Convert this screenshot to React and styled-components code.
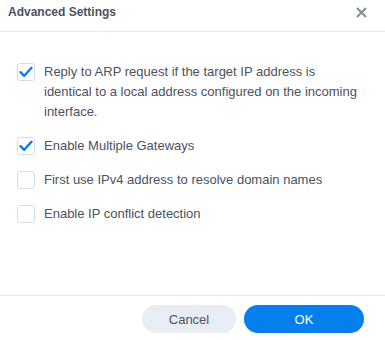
import React, { useState } from 'react';
import styled, { createGlobalStyle } from 'styled-components';

const GlobalStyle = createGlobalStyle`
  html, body {
    margin: 0;
    padding: 0;
    background: #ffffff;
  }
  body {
    font-family: "Liberation Sans", Arial, sans-serif;
  }
`;

const Dialog = styled.div`
  width: 385px;
  height: 340px;
  display: flex;
  flex-direction: column;
  background: #ffffff;
  box-sizing: border-box;
`;

const Header = styled.div`
  height: 32px;
  box-sizing: border-box;
  border-bottom: 1px solid #e6eaf0;
  display: flex;
  align-items: center;
  justify-content: space-between;
  padding: 0 17px 7px 8px;
`;

const Title = styled.div`
  font-size: 12px;
  font-weight: bold;
  color: #4b5260;
`;

const CloseButton = styled.button`
  border: none;
  background: none;
  padding: 0;
  width: 14px;
  height: 14px;
  display: flex;
  align-items: center;
  justify-content: center;
  cursor: pointer;
`;

const Body = styled.div`
  flex: 1;
  display: flex;
  flex-direction: column;
  gap: 14px;
  padding: 30px 20px 0 17px;
`;

const Option = styled.label`
  display: flex;
  align-items: flex-start;
  gap: 9px;
  cursor: pointer;
`;

const Box = styled.span`
  flex: none;
  width: 18px;
  height: 18px;
  margin-top: 1px;
  box-sizing: border-box;
  border: 1px solid #d6dde7;
  border-radius: 3px;
  background: #ffffff;
  display: flex;
  align-items: center;
  justify-content: center;
`;

const Text = styled.span`
  font-size: 13px;
  line-height: 20px;
  color: #4b5260;
`;

const Footer = styled.div`
  height: 45px;
  box-sizing: border-box;
  border-top: 1px solid #e6eaf0;
  display: flex;
  justify-content: flex-end;
  align-items: flex-start;
  gap: 8px;
  padding: 9px 21px 0 0;
`;

const Button = styled.button`
  height: 28px;
  width: ${p => (p.$primary ? '120px' : '94px')};
  border: none;
  border-radius: 14px;
  font-family: "Liberation Sans", Arial, sans-serif;
  font-size: 13px;
  color: ${p => (p.$primary ? '#ffffff' : '#4b5260')};
  background: ${p => (p.$primary ? '#057feb' : '#e9eef4')};
  cursor: pointer;
`;

const Check = () => (
  <svg width="14" height="12" viewBox="0 0 14 12">
    <path d="M1.5 6.2 L5.2 9.8 L12.5 1.8" fill="none" stroke="#0a7fe8" strokeWidth="2.4" strokeLinecap="round" strokeLinejoin="round" />
  </svg>
);

const options = [
  { label: 'Reply to ARP request if the target IP address is identical to a local address configured on the incoming interface.', checked: true },
  { label: 'Enable Multiple Gateways', checked: true },
  { label: 'First use IPv4 address to resolve domain names', checked: false },
  { label: 'Enable IP conflict detection', checked: false },
];

export default function App() {
  const [values, setValues] = useState(options.map(o => o.checked));

  const toggle = i => setValues(v => v.map((x, j) => (j === i ? !x : x)));

  return (
    <>
      <GlobalStyle />
      <Dialog>
        <Header>
          <Title>Advanced Settings</Title>
          <CloseButton aria-label="Close">
            <svg width="11" height="11" viewBox="0 0 11 11">
              <path d="M1 1 L10 10 M10 1 L1 10" stroke="#8a8f96" strokeWidth="2.2" />
            </svg>
          </CloseButton>
        </Header>
        <Body>
          {options.map((o, i) => (
            <Option key={o.label} onClick={() => toggle(i)}>
              <Box>{values[i] && <Check />}</Box>
              <Text>{o.label}</Text>
            </Option>
          ))}
        </Body>
        <Footer>
          <Button>Cancel</Button>
          <Button $primary>OK</Button>
        </Footer>
      </Dialog>
    </>
  );
}
